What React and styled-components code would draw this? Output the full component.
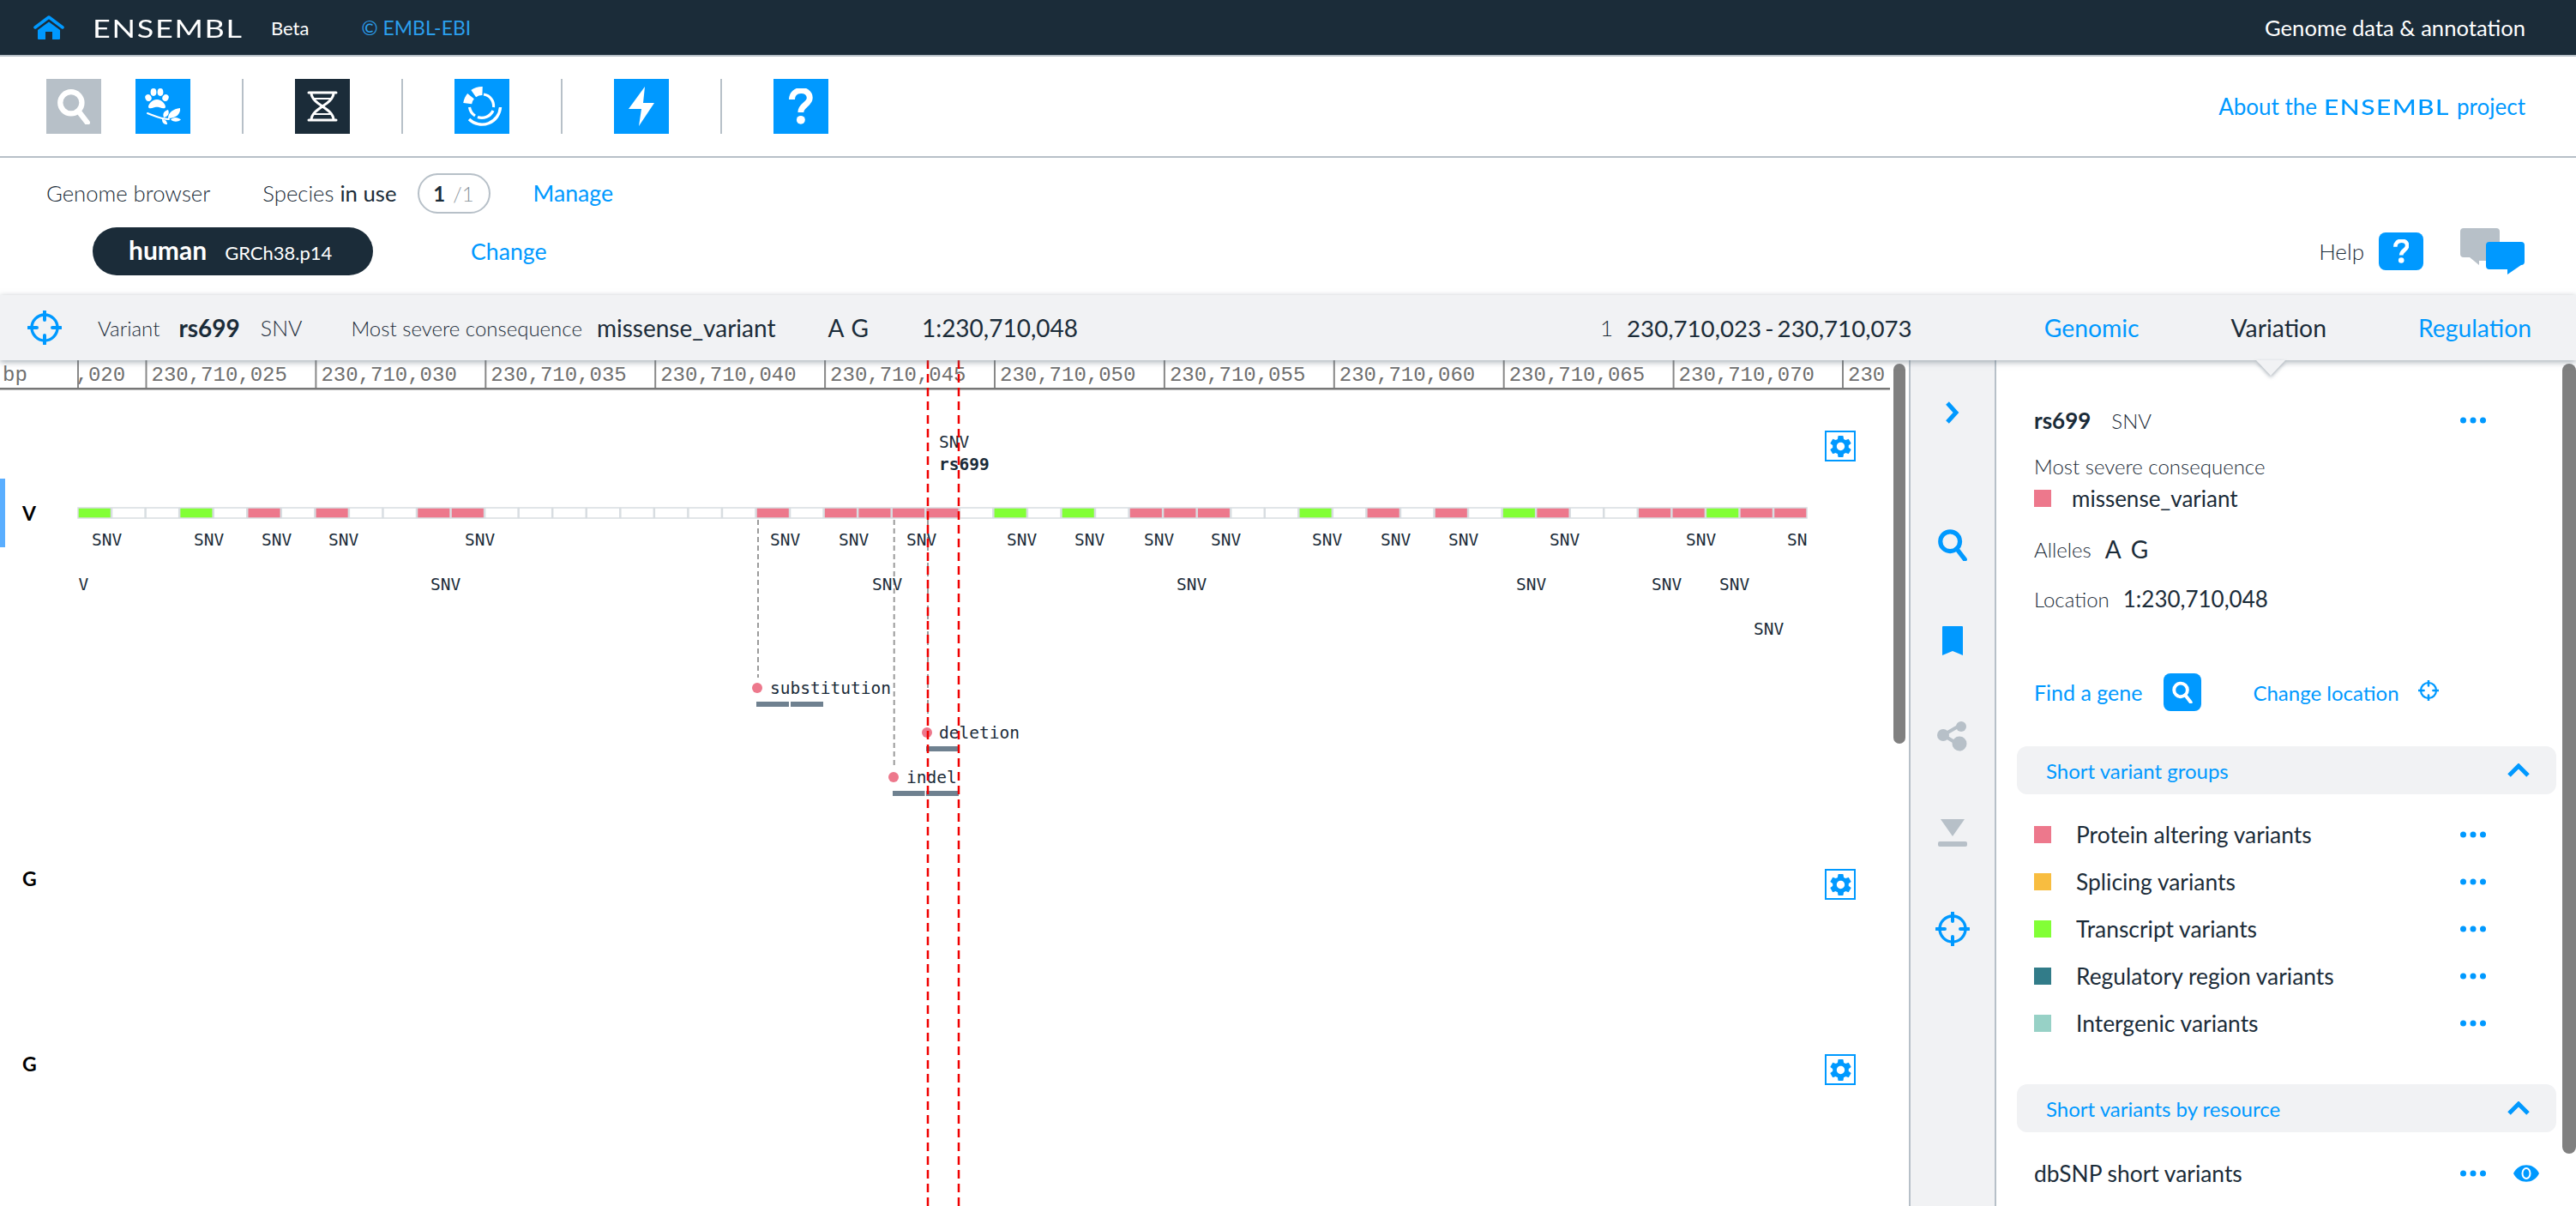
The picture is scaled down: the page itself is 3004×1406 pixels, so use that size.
import styled, { createGlobalStyle } from "styled-components";
import { MdSettings } from "react-icons/md";

const BLUE = "#0099ff";
const DARK = "#1b2c39";
const GREY = "#b7c0c8";
const PINK = "#ed788c";
const GREEN = "#82ff36";

const GlobalStyle = createGlobalStyle`
  html, body {
    margin: 0;
    padding: 0;
    background: #fff;
    font-family: Lato, "Open Sans", sans-serif;
    color: ${DARK};
  }
  * { box-sizing: border-box; }
`;

const Page = styled.div`
  width: 3004px;
  height: 1406px;
  display: flex;
  flex-direction: column;
  overflow: hidden;
`;

const TopBar = styled.header`
  height: 66px;
  flex: none;
  background: ${DARK};
  border-bottom: 2px solid ${GREY};
  display: flex;
  align-items: center;
  padding: 0 59px 0 39px;
  color: #fff;
`;

// the wordmark is a wide face, so Lato gets stretched sideways
const Logo = styled.span`
  display: inline-block;
  width: 176px;
  margin-left: 33px;
  font-size: 29px;
  font-weight: 400;
  letter-spacing: 1.4px;
  white-space: nowrap;
  transform: scaleX(1.24);
  transform-origin: left center;
`;

const Beta = styled.span`
  font-size: 22px;
  margin-left: 32px;
`;

const Copyright = styled.span`
  font-size: 23px;
  color: #2b9fee;
  margin-left: 61px;
`;

const Tagline = styled.span`
  font-size: 25.6px;
  margin-left: auto;
`;

const Toolbar = styled.nav`
  height: 118px;
  flex: none;
  border-bottom: 2px solid ${GREY};
  display: flex;
  align-items: center;
  padding: 0 59px 0 54px;
`;

const AppTile = styled.div`
  width: 64px;
  height: 64px;
  background: ${(p) => p.$bg || BLUE};
  margin-left: ${(p) => p.$ml || 0}px;
  display: flex;
  align-items: center;
  justify-content: center;
`;

const Divider = styled.div`
  width: 2px;
  height: 64px;
  background: ${GREY};
  margin: 0 60px;
`;

const AboutLink = styled.a`
  margin-left: auto;
  font-size: 26px;
  color: ${BLUE};
  display: flex;
  align-items: center;
`;

const AboutLogo = styled.span`
  display: inline-block;
  width: 147px;
  margin: 0 8px;
  font-size: 25px;
  font-weight: 500;
  letter-spacing: 1.2px;
  white-space: nowrap;
  transform: scaleX(1.2);
  transform-origin: left center;
`;

const SpeciesPanel = styled.section`
  height: 160px;
  flex: none;
  padding: 16px 59px 0 54px;
`;

const SpeciesRow = styled.div`
  display: flex;
  align-items: center;
  height: 50px;
`;

const SelectorRow = styled.div`
  display: flex;
  align-items: center;
  height: 56px;
  margin: 15px 0 0 54px;
`;

const Muted = styled.span`
  font-size: ${(p) => p.$size || 24}px;
  font-weight: 300;
  margin-left: ${(p) => p.$ml || 0}px;
  white-space: nowrap;
`;

const Value = styled.span`
  font-size: ${(p) => p.$size || 26}px;
  font-weight: ${(p) => p.$weight || 400};
  margin-left: ${(p) => p.$ml || 0}px;
  white-space: nowrap;
`;

const RegionValue = styled(Value)`
  word-spacing: -3px;
`;

const Link = styled.a`
  font-size: ${(p) => p.$size || 25}px;
  font-weight: 400;
  color: ${BLUE};
  margin-left: ${(p) => p.$ml || 0}px;
  white-space: nowrap;
`;

const CountPill = styled.div`
  width: 85px;
  height: 47px;
  margin-left: 24px;
  border: 2px solid ${GREY};
  border-radius: 24px;
  display: flex;
  align-items: center;
  justify-content: center;
  gap: 9px;
  font-size: 24px;
  font-weight: 700;
  span { font-weight: 300; color: #8a949c; }
`;

const SpeciesPill = styled.div`
  width: 327px;
  height: 56px;
  background: ${DARK};
  border-radius: 28px;
  color: #fff;
  display: flex;
  align-items: baseline;
  padding: 8px 0 0 42px;
  gap: 21px;
`;

const SpeciesName = styled.span`
  font-size: 30px;
  font-weight: 700;
`;

const Assembly = styled.span`
  font-size: 22px;
`;

const HelpBox = styled.div`
  margin-left: auto;
  display: flex;
  align-items: center;
`;

const RoundTile = styled.div`
  width: ${(p) => p.$w}px;
  height: 44px;
  margin-left: ${(p) => p.$ml || 0}px;
  background: ${BLUE};
  border-radius: 8px;
  display: flex;
  align-items: center;
  justify-content: center;
`;

const ContextBar = styled.div`
  height: 76px;
  flex: none;
  background: #f1f2f4;
  display: flex;
  align-items: center;
  padding: 0 52px 0 32px;
  position: relative;
  z-index: 2;
  box-shadow: 0 2px 7px rgba(90, 105, 120, 0.55);
`;

const Tabs = styled.div`
  display: flex;
  gap: 107px;
  margin-left: 154px;
`;

const Tab = styled.a`
  font-size: 28.3px;
  color: ${(p) => (p.$active ? DARK : BLUE)};
`;

const Pointer = styled.div`
  position: absolute;
  left: 2631px;
  top: 76px;
  width: 0;
  height: 0;
  border-left: 17px solid transparent;
  border-right: 17px solid transparent;
  border-top: 18px solid #f1f2f4;
  filter: drop-shadow(0 2px 2px rgba(90, 105, 120, 0.5));
`;

const Main = styled.main`
  flex: 1;
  min-height: 0;
  display: flex;
`;

const Genome = styled.div`
  width: 2226px;
  flex: none;
  position: relative;
  overflow: hidden;
`;

const Canvas = styled.svg`
  display: block;
`;

const ScrollThumb = styled.div`
  position: absolute;
  top: 4px;
  right: ${(p) => p.$right}px;
  width: ${(p) => p.$w}px;
  height: ${(p) => p.$h}px;
  background: #808080;
  border-radius: 8px;
`;

const ActiveMark = styled.div`
  position: absolute;
  left: 0;
  top: 138px;
  width: 6px;
  height: 80px;
  background: #5aaeff;
`;

const TrackLetter = styled.div`
  position: absolute;
  left: 26px;
  top: ${(p) => p.$top}px;
  font-size: 23px;
  font-weight: 700;
  color: #000;
  line-height: 30px;
`;

const GearBox = styled.div`
  position: absolute;
  left: 2128px;
  top: ${(p) => p.$top}px;
  width: 36px;
  height: 36px;
  border: 2px solid ${BLUE};
  color: ${BLUE};
  display: flex;
  align-items: center;
  justify-content: center;
`;

const ToolColumn = styled.aside`
  width: 102px;
  flex: none;
  background: #f1f2f4;
  border-left: 2px solid ${GREY};
  border-right: 2px solid ${GREY};
  display: flex;
  flex-direction: column;
  padding-top: 5px;
`;

const ToolCell = styled.div`
  height: 112px;
  flex: none;
  margin-bottom: ${(p) => p.$mb || 0}px;
  display: flex;
  align-items: center;
  justify-content: center;
`;

const Sidebar = styled.aside`
  flex: 1;
  position: relative;
  padding: 55px 23px 0 24px;
  overflow: hidden;
`;

const InfoRow = styled.div`
  display: flex;
  align-items: center;
  height: 30px;
  padding-left: 20px;
  padding-right: ${(p) => p.$pr || 0}px;
  margin-top: ${(p) => p.$mt || 0}px;
`;

const Spacer = styled.div`
  flex: 1;
`;

const Swatch = styled.span`
  width: 20px;
  height: 20px;
  flex: none;
  background: ${(p) => p.$color};
  margin-right: ${(p) => p.$mr}px;
`;

const Actions = styled.div`
  display: flex;
  align-items: center;
  height: 44px;
  padding-left: 20px;
  margin-top: 72px;
`;

const PanelHeader = styled.div`
  height: 56px;
  margin-top: ${(p) => p.$mt}px;
  background: #f1f2f4;
  border-radius: 12px;
  display: flex;
  align-items: center;
  justify-content: space-between;
  padding: 0 31px 0 34px;
  color: ${BLUE};
  font-size: 24px;
`;

const VariantList = styled.div`
  display: flex;
  flex-direction: column;
  gap: 25px;
  margin-top: 32px;
`;

const Name = styled.span`
  font-size: 26.4px;
  flex: 1;
`;

const Eye = styled.svg`
  margin-left: 32px;
  margin-right: -62px;
`;

const TileGlyph = ({ children, ...rest }) => (
  <svg width="64" height="64" viewBox="0 0 64 64" fill="none" {...rest}>
    {children}
  </svg>
);

const Icon = ({ size, color = BLUE, children }) => (
  <svg width={size} height={size} viewBox="0 0 40 40" fill="none" stroke={color}>
    {children}
  </svg>
);

const HomeIcon = () => (
  <svg width="36" height="29" viewBox="0 0 36 29" style={{ flex: "none" }}>
    <path d="M2 14 L18 2 L34 14" fill="none" stroke={BLUE} strokeWidth="3.6" strokeLinecap="round" strokeLinejoin="round" />
    <path d="M5 17 L18 7.5 L31 17 V27 a1 1 0 0 1 -1 1 H22 V19 H14 V28 H6 a1 1 0 0 1 -1 -1 Z" fill={BLUE} />
  </svg>
);

const SearchIcon = ({ size, color = "#fff", width = 6 }) => (
  <Icon size={size} color={color}>
    <circle cx="17" cy="16" r="12" strokeWidth={width} />
    <path d="M25 25 L35 38" strokeWidth={width} strokeLinecap="round" />
  </Icon>
);

const PawIcon = () => (
  <TileGlyph>
    <g fill="#fff">
      <ellipse cx="15" cy="22" rx="3.6" ry="4" transform="rotate(-25 15 22)" />
      <ellipse cx="21" cy="15.5" rx="3.4" ry="4.4" />
      <ellipse cx="29" cy="15.5" rx="3.4" ry="4.4" />
      <ellipse cx="35" cy="22" rx="3.6" ry="4" transform="rotate(25 35 22)" />
      <path d="M25 24 C31 24 35 30 35 32.5 C35 35 31 34.5 29 33.5 C27 32.5 23 32.5 21 33.5 C19 34.5 15 35 15 32.5 C15 30 19 24 25 24 Z" />
      <path d="M33 45 C31 40 34 37 38 36 C40 40 38 44 33 45 Z" />
      <path d="M38 46 C38 39 44 35 52 34 C53 41 47 46 38 46 Z" />
      <path d="M41 47.5 C44 44 49 44 53 47.5 C49 50.5 45 50.5 41 47.5 Z" />
      <path d="M31 47 C34 47 37 49 37 53 C33 53 31 51 31 47 Z" />
    </g>
    <path d="M14 40 C22 43 30 47 39 47" stroke="#fff" strokeWidth="2" strokeLinecap="round" />
  </TileGlyph>
);

const DnaIcon = () => (
  <TileGlyph stroke="#fff">
    <path d="M19 16 C19 30 45 34 45 48" strokeWidth="3" />
    <path d="M45 16 C45 30 19 34 19 48" strokeWidth="3" />
    <path d="M16 16 H48 M16 48 H48" strokeWidth="3" strokeLinecap="round" />
    <path d="M22 23 H42 M22 41 H42" strokeWidth="1.8" />
  </TileGlyph>
);

const BrowserIcon = () => (
  <TileGlyph stroke="#fff">
    <path d="M22.2 17.1 A17 17 0 0 1 32.6 14" strokeWidth="10" />
    <path d="M15.2 28.6 A17 17 0 0 1 19 20.1" strokeWidth="10" />
    <path d="M34 18 A13.5 13.5 0 0 1 45.5 33" strokeWidth="3.2" />
    <path d="M17.5 33 A14.5 14.5 0 0 0 24 43 M27 44.5 A14.5 14.5 0 0 0 45 37" strokeWidth="3.2" />
    <path d="M53.5 33 A21.5 21.5 0 0 1 17 47" strokeWidth="3.4" />
  </TileGlyph>
);

const BoltIcon = () => (
  <svg width="30" height="46" viewBox="0 0 30 46">
    <path d="M19 0 L17 19 L30 19 L12 46 L15 26 L0 26 Z" fill="#fff" />
  </svg>
);

const QuestionIcon = ({ h }) => (
  <svg width={h * 0.66} height={h} viewBox="0 0 28 42" fill="none">
    <path d="M3.5 13 C3.5 -1 24.5 -1 24.5 11 C24.5 19 14 19 14 28" stroke="#fff" strokeWidth="7" />
    <circle cx="14" cy="37" r="5" fill="#fff" />
  </svg>
);

const ChatIcon = () => (
  <svg width="76" height="54" viewBox="0 0 76 54" style={{ marginLeft: 43 }}>
    <path d="M4 0 H42 a4 4 0 0 1 4 4 V34 a4 4 0 0 1 -4 4 H22 L22 43 L11 34 H4 a4 4 0 0 1 -4 -4 V4 a4 4 0 0 1 4 -4 Z" fill={GREY} />
    <path d="M34 16 H71 a4 4 0 0 1 4 4 V39 a4 4 0 0 1 -4 4 L55 54 V48 H34 a4 4 0 0 1 -4 -4 V20 a4 4 0 0 1 4 -4 Z" fill={BLUE} />
  </svg>
);

const TargetIcon = ({ size, width = 3.4 }) => (
  <Icon size={size}>
    <circle cx="20" cy="20" r="15" strokeWidth={width} />
    <path d="M20 1 V11 M20 29 V39 M1 20 H11 M29 20 H39" strokeWidth={width + 0.6} strokeLinecap="round" />
  </Icon>
);

const ChevronRight = () => (
  <svg width="18" height="26" viewBox="0 0 18 26" fill="none">
    <path d="M3 2 L13 13 L3 24" stroke={BLUE} strokeWidth="5" />
  </svg>
);

const ChevronUp = () => (
  <svg width="26" height="16" viewBox="0 0 26 16" fill="none">
    <path d="M2 14 L13 3 L24 14" stroke={BLUE} strokeWidth="5" />
  </svg>
);

const Bookmark = () => (
  <svg width="26" height="34" viewBox="0 0 26 34">
    <path d="M2 0 H24 a1 1 0 0 1 1 1 V34 L13 29 L1 34 V1 a1 1 0 0 1 1 -1 Z" fill={BLUE} />
  </svg>
);

const ShareIcon = () => (
  <svg width="36" height="36" viewBox="0 0 36 36" fill={GREY}>
    <path d="M7 16 L26 5 M7 16 L25 27" stroke={GREY} strokeWidth="4" />
    <circle cx="7" cy="16" r="7" />
    <circle cx="28" cy="6" r="6" />
    <circle cx="26" cy="26" r="8.5" />
  </svg>
);

const DownloadIcon = () => (
  <svg width="34" height="32" viewBox="0 0 34 32" fill={GREY}>
    <path d="M3 0 H31 L17 20 Z" />
    <rect x="0" y="26" width="34" height="6" rx="2" />
  </svg>
);

const Dots = () => (
  <svg width="30" height="8" viewBox="0 0 30 8" style={{ flex: "none" }} fill={BLUE}>
    <circle cx="3.5" cy="4" r="3.5" />
    <circle cx="15" cy="4" r="3.5" />
    <circle cx="26.5" cy="4" r="3.5" />
  </svg>
);

const EyeIcon = () => (
  <Eye width="30" height="20" viewBox="0 0 30 20">
    <path d="M0 10 C6 -3 24 -3 30 10 C24 23 6 23 0 10 Z" fill={BLUE} />
    <ellipse cx="15" cy="10" rx="5.5" ry="7" fill="#fff" />
    <ellipse cx="15" cy="10" rx="3.5" ry="5" fill={BLUE} />
  </Eye>
);

// track data: p = pink, g = green, . = empty, one letter per base
const CELLS = "g..g.p.p..pp........p.pppp.g.g.ppp..g.p.p.gp..ppgpp";
const CELL_X = 91;
const CELL_W = 39.55;
const TICKS = ["025", "030", "035", "040", "045", "050", "055", "060", "065", "070"];
const LABELS = [
  [107, 629], [226, 629], [305, 629], [383, 629], [542, 629], [898, 629], [978, 629], [1057, 629],
  [1174, 629], [1253, 629], [1334, 629], [1412, 629], [1530, 629], [1610, 629], [1689, 629],
  [1807, 629], [1966, 629], [2084, 629],
  [68, 681], [502, 681], [1017, 681], [1372, 681], [1768, 681], [1926, 681], [2005, 681],
  [2045, 733],
];

const mono = '"DejaVu Sans Mono", "Liberation Mono", monospace';
const rulerFont = '"Liberation Mono", monospace';

const RulerText = ({ x, children }) => (
  <text x={x} y="444" fontFamily={rulerFont} fontSize="24" fill="#6f6f6f">{children}</text>
);

const RulerTick = ({ x }) => (
  <line x1={x} x2={x} y1="420" y2="452" stroke="#888" strokeWidth="2" />
);

const TrackCanvas = () => (
  <Canvas width="2204" height="986" viewBox="0 420 2204 986">
    <defs>
      <clipPath id="trackClip">
        <rect x={CELL_X} y="420" width="2016" height="986" />
      </clipPath>
    </defs>

    {/* ruler */}
    <RulerText x="3">bp</RulerText>
    <RulerTick x={CELL_X} />
    <RulerText x="88.5">,020</RulerText>
    {TICKS.map((t, i) => {
      const x = 170.5 + i * 197.9;
      return (
        <g key={t}>
          <RulerTick x={x} />
          <RulerText x={x + 6}>{"230,710," + t}</RulerText>
        </g>
      );
    })}
    <RulerTick x={2149} />
    <RulerText x="2155">230</RulerText>
    <rect x="0" y="452" width="2204" height="2.5" fill="#777" />

    {/* connector lines */}
    <path d="M884 606 V790 M1042.7 606 V895 M1082 606 V840" stroke="#9b9b9b" strokeWidth="2" strokeDasharray="6 4" />

    {/* variant cells */}
    {CELLS.split("").map((c, i) => (
      <rect
        key={i}
        x={CELL_X + i * CELL_W}
        y="592"
        width={CELL_W - 1}
        height="12"
        fill={c === "p" ? PINK : c === "g" ? GREEN : "#fff"}
        stroke="#d8dde1"
        strokeWidth="1.5"
      />
    ))}

    {/* labels */}
    <g clipPath="url(#trackClip)" fontFamily={mono} fontSize="19.5" fill={DARK}>
      {LABELS.map(([x, y]) => (
        <text key={x + "-" + y} x={x} y={y} dominantBaseline="central">SNV</text>
      ))}
    </g>
    <text x="1095" y="515" fontFamily={mono} fontSize="19.5" fill={DARK} dominantBaseline="central">SNV</text>
    <text x="1095" y="541" fontFamily={mono} fontSize="19.5" fontWeight="700" fill={DARK} dominantBaseline="central">rs699</text>

    {/* allele sequences */}
    <g fontFamily={mono} fontSize="19.5" fill={DARK}>
      <circle cx="883" cy="802" r="6" fill={PINK} />
      <text x="898" y="802" dominantBaseline="central">substitution</text>
      <circle cx="1081" cy="854" r="6" fill={PINK} />
      <text x="1095" y="854" dominantBaseline="central">deletion</text>
      <circle cx="1042" cy="906" r="6" fill={PINK} />
      <text x="1057" y="906" dominantBaseline="central">indel</text>
    </g>
    <g fill="#6f8190">
      <rect x="882" y="818" width="38" height="6" />
      <rect x="922" y="818" width="38" height="6" />
      <rect x="1080" y="870" width="38" height="6" />
      <rect x="1041" y="922" width="37.5" height="6" />
      <rect x="1080" y="922" width="38" height="6" />
    </g>

    {/* focus lines */}
    <path d="M1082 420 V1406 M1118 420 V1406" stroke="#f00000" strokeWidth="2.5" strokeDasharray="10 6" />
  </Canvas>
);

const GROUPS = [
  ["#ed788c", "Protein altering variants"],
  ["#f8bd40", "Splicing variants"],
  ["#82ff36", "Transcript variants"],
  ["#327c89", "Regulatory region variants"],
  ["#97d1c6", "Intergenic variants"],
];

const App = () => (
  <Page>
    <GlobalStyle />
    <TopBar>
      <HomeIcon />
      <Logo>ENSEMBL</Logo>
      <Beta>Beta</Beta>
      <Copyright>© EMBL-EBI</Copyright>
      <Tagline>Genome data &amp; annotation</Tagline>
    </TopBar>

    <Toolbar>
      <AppTile $bg={GREY}><SearchIcon size={42} /></AppTile>
      <AppTile $ml={40}><PawIcon /></AppTile>
      <Divider />
      <AppTile $bg={DARK}><DnaIcon /></AppTile>
      <Divider />
      <AppTile><BrowserIcon /></AppTile>
      <Divider />
      <AppTile><BoltIcon /></AppTile>
      <Divider />
      <AppTile><QuestionIcon h={42} /></AppTile>
      <AboutLink>About the<AboutLogo>ENSEMBL</AboutLogo>project</AboutLink>
    </Toolbar>

    <SpeciesPanel>
      <SpeciesRow>
        <Muted $size={25.7}>Genome browser</Muted>
        <Muted $size={25.7} $ml={61}>Species <Value $size={25.7}>in use</Value></Muted>
        <CountPill>1 <span>/1</span></CountPill>
        <Link $ml={50} $size={26.7}>Manage</Link>
      </SpeciesRow>
      <SelectorRow>
        <SpeciesPill>
          <SpeciesName>human</SpeciesName>
          <Assembly>GRCh38.p14</Assembly>
        </SpeciesPill>
        <Link $ml={114} $size={26.7}>Change</Link>
        <HelpBox>
          <Muted $size={26}>Help</Muted>
          <RoundTile $w={52} $ml={17}><QuestionIcon h={28} /></RoundTile>
          <ChatIcon />
        </HelpBox>
      </SelectorRow>
    </SpeciesPanel>

    <ContextBar>
      <TargetIcon size={40} />
      <Muted $ml={42}>Variant</Muted>
      <Value $ml={22} $weight={700} $size={28}>rs699</Value>
      <Muted $ml={24} $size={25}>SNV</Muted>
      <Muted $ml={57}>Most severe consequence</Muted>
      <Value $ml={17} $size={28}>missense_variant</Value>
      <Value $ml={61} $size={28}>A</Value>
      <Value $ml={8} $size={28}>G</Value>
      <Value $ml={62} $size={28}>1:230,710,048</Value>
      <Spacer />
      <Muted $size={26}>1</Muted>
      <RegionValue $ml={16} $size={27.7}>230,710,023 - 230,710,073</RegionValue>
      <Tabs>
        <Tab>Genomic</Tab>
        <Tab $active>Variation</Tab>
        <Tab>Regulation</Tab>
      </Tabs>
      <Pointer />
    </ContextBar>

    <Main>
      <Genome>
        <TrackCanvas />
        <ActiveMark />
        <TrackLetter $top={163}>V</TrackLetter>
        <TrackLetter $top={589}>G</TrackLetter>
        <TrackLetter $top={805}>G</TrackLetter>
        <GearBox $top={82}><MdSettings size={31} /></GearBox>
        <GearBox $top={593}><MdSettings size={31} /></GearBox>
        <GearBox $top={809}><MdSettings size={31} /></GearBox>
        <ScrollThumb $right={4} $w={14} $h={443} />
      </Genome>

      <ToolColumn>
        <ToolCell $mb={42}><ChevronRight /></ToolCell>
        <ToolCell><SearchIcon size={38} color={BLUE} width={5.5} /></ToolCell>
        <ToolCell><Bookmark /></ToolCell>
        <ToolCell><ShareIcon /></ToolCell>
        <ToolCell><DownloadIcon /></ToolCell>
        <ToolCell><TargetIcon size={40} /></ToolCell>
      </ToolColumn>

      <Sidebar>
        <InfoRow $pr={82}>
          <Value $size={26} $weight={700}>rs699</Value>
          <Muted $ml={24}>SNV</Muted>
          <Spacer />
          <Dots />
        </InfoRow>
        <InfoRow $mt={23}><Muted>Most severe consequence</Muted></InfoRow>
        <InfoRow $mt={8}>
          <Swatch $color={PINK} $mr={24} />
          <Value>missense_variant</Value>
        </InfoRow>
        <InfoRow $mt={29}>
          <Muted>Alleles</Muted>
          <Value $ml={16} $size={28}>A</Value>
          <Value $ml={11} $size={28}>G</Value>
        </InfoRow>
        <InfoRow $mt={28}>
          <Muted>Location</Muted>
          <Value $ml={16}>1:230,710,048</Value>
        </InfoRow>
        <Actions>
          <Link>Find a gene</Link>
          <RoundTile $w={44} $ml={25}><SearchIcon size={26} width={6} /></RoundTile>
          <Link $ml={60} $size={24}>Change location</Link>
          <Muted $ml={22}><TargetIcon size={24} width={3.6} /></Muted>
        </Actions>

        <PanelHeader $mt={41}>Short variant groups<ChevronUp /></PanelHeader>
        <VariantList>
          {GROUPS.map(([color, name]) => (
            <InfoRow key={name} $pr={82}>
              <Swatch $color={color} $mr={29} />
              <Name>{name}</Name>
              <Dots />
            </InfoRow>
          ))}
        </VariantList>

        <PanelHeader $mt={56}>Short variants by resource<ChevronUp /></PanelHeader>
        <InfoRow $mt={33} $pr={82}>
          <Name>dbSNP short variants</Name>
          <Dots />
          <EyeIcon />
        </InfoRow>
        <ScrollThumb $right={0} $w={16} $h={921} />
      </Sidebar>
    </Main>
  </Page>
);

export default App;
